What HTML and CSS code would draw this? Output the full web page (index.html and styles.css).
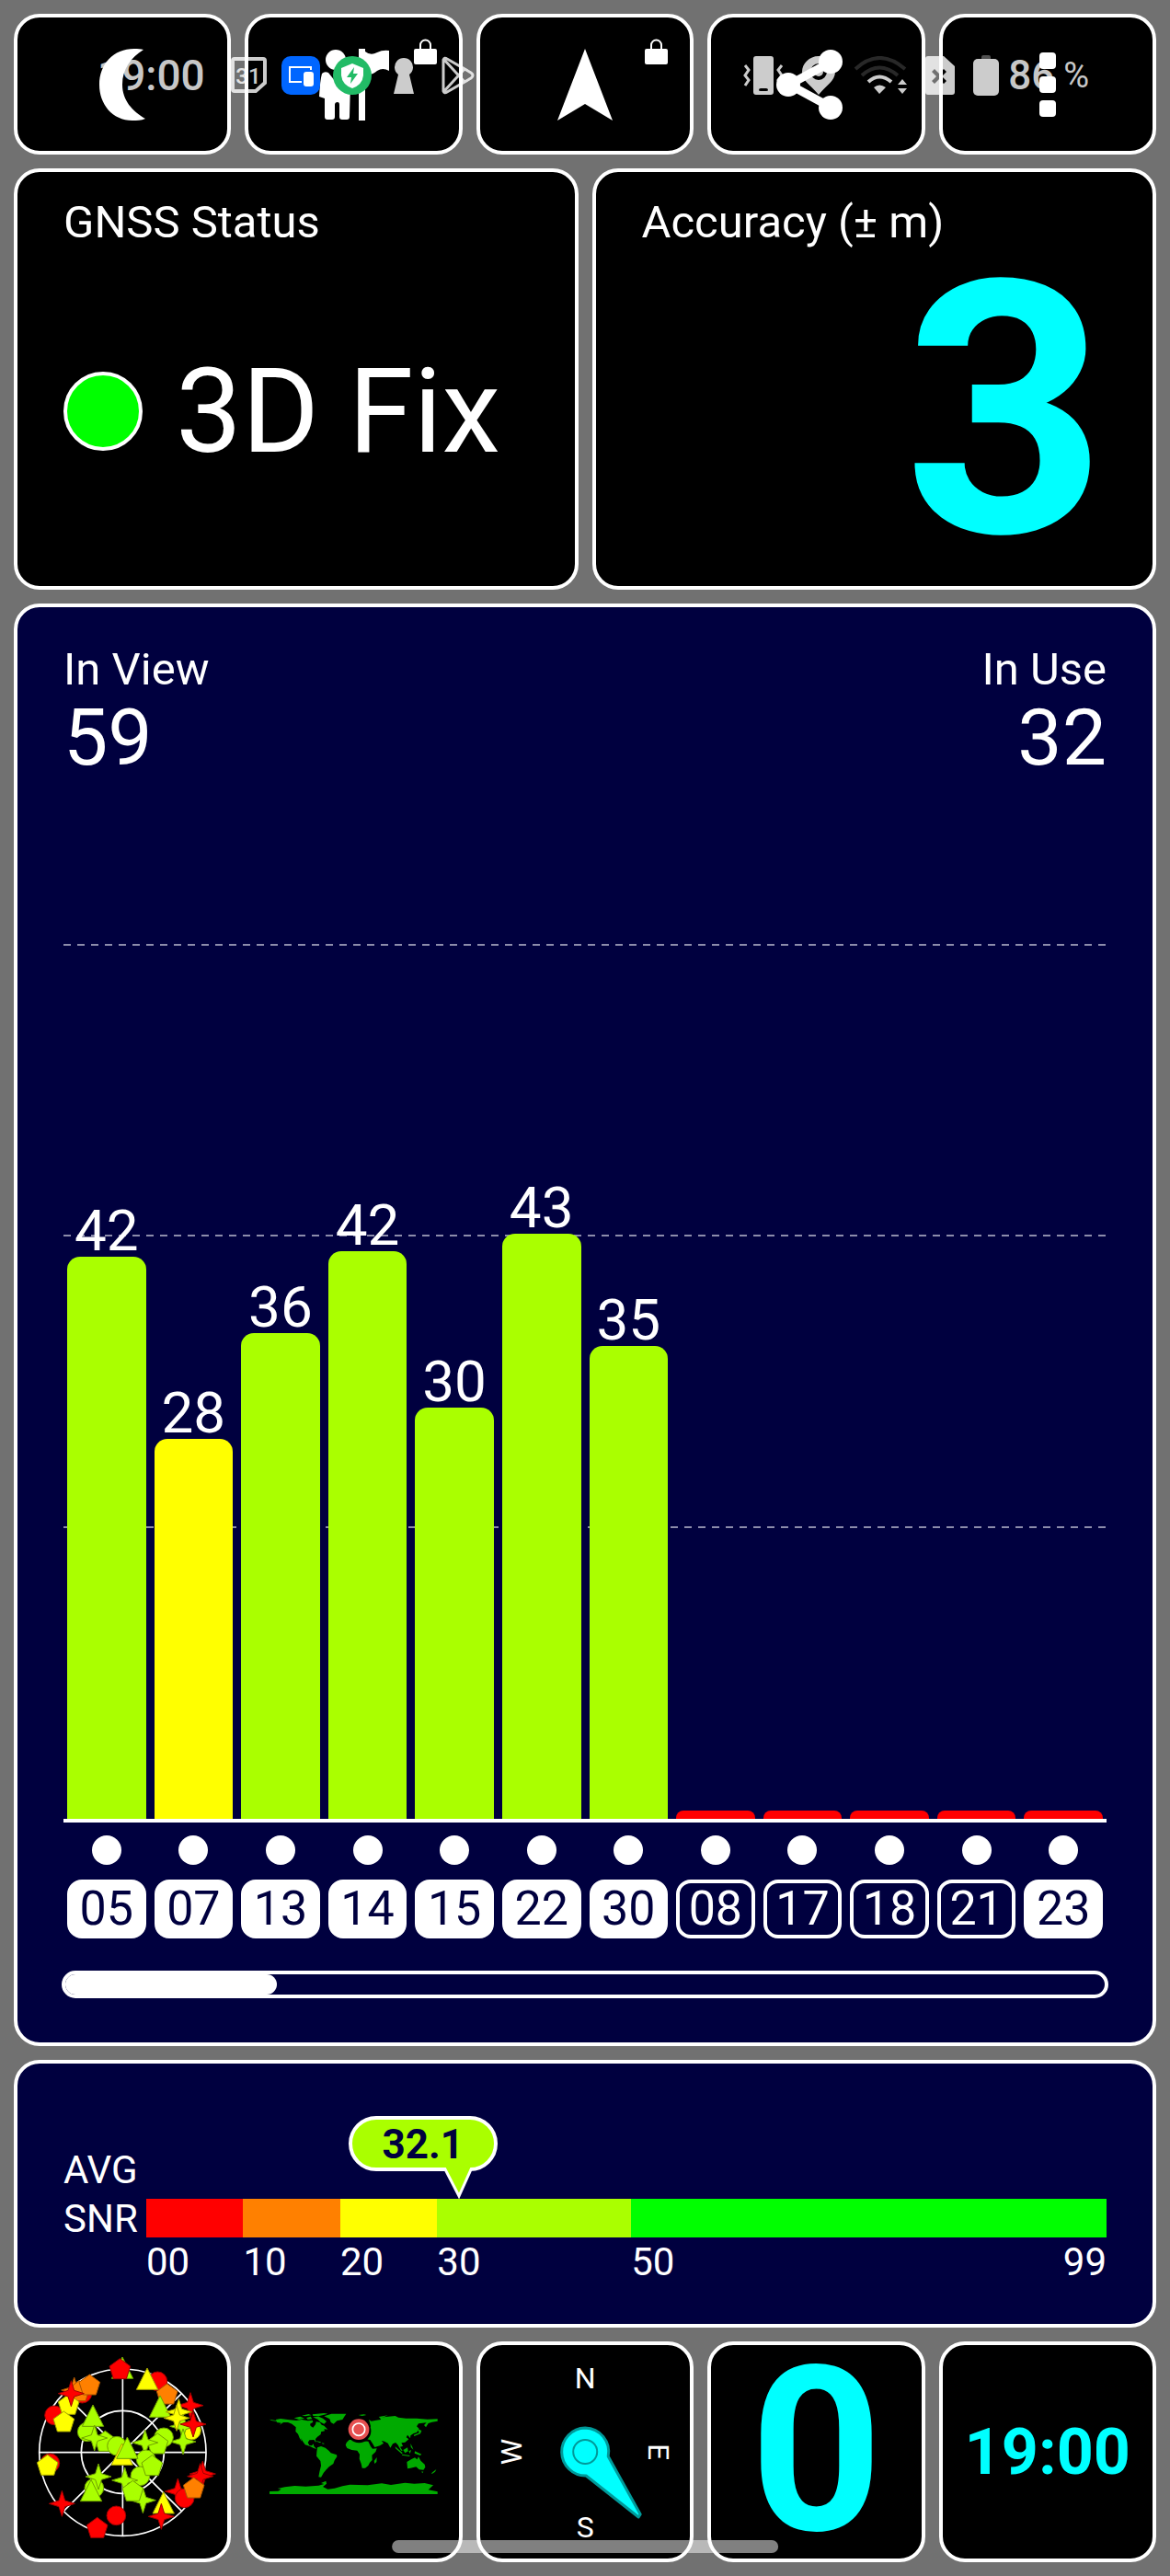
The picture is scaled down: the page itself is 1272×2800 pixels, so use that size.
FILE: index.html
```html
<!DOCTYPE html>
<html lang="en">
<head>
    <meta charset="UTF-8">
    <meta name="viewport" content="width=device-width, initial-scale=1.0">
    <title>GNSS Status</title>
    <link rel="stylesheet" href="styles.css">
</head>
<body>
    <main class="dashboard">
        <!-- toolbar -->
        <nav class="row toolbar">
            <button class="tile" aria-label="Night mode">
                <svg width="50" height="78" viewBox="0 0 50 78"><path d="M48 1C34 10 25 22 25 39C25 56 36 68 50 76C45 78 41 78 36 78C14 78 0 60 0 39C0 17 15 0 38 0C42 0 45 0 48 1Z"/></svg>
            </button>
            <button class="tile" aria-label="Guide">
                <svg width="76" height="78" viewBox="0 0 76 78">
                    <circle cx="18" cy="12" r="11"/>
                    <path d="M3 27Q6 24 10 26L18 36L28 25Q34 24 40 14L46 18Q42 28 34 36L33 74Q33 77 30 77H25Q22 77 22 74V61Q22 58 20 58Q17 58 17 61V74Q17 77 14 77H9Q6 77 6 74V54L0 52Q1 34 3 27Z"/>
                    <path d="M43 0H50V78H43Z"/>
                    <path d="M50 3Q56 8 63 4Q69 1 76 2V24Q69 20 63 24Q56 30 50 27Z"/>
                </svg>
                <svg class="lock" width="25" height="28" viewBox="0 0 25 28"><rect y="11" width="25" height="17" rx="2"/><path d="M7 12V7a5 5 0 0 1 11 0V12" fill="none" stroke="#fff" stroke-width="2"/></svg>
            </button>
            <button class="tile" aria-label="Navigate">
                <svg width="60" height="78" viewBox="0 0 60 78"><path d="M30 0L60 78L30 60L0 78Z"/></svg>
                <svg class="lock" width="25" height="28" viewBox="0 0 25 28"><rect y="11" width="25" height="17" rx="2"/><path d="M7 12V7a5 5 0 0 1 11 0V12" fill="none" stroke="#fff" stroke-width="2"/></svg>
            </button>
            <button class="tile" aria-label="Share">
                <svg width="86" height="76" viewBox="0 0 86 76"><path d="M60 13L14 38L60 63" fill="none" stroke="#fff" stroke-width="9"/><circle cx="59" cy="13" r="13"/><circle cx="13" cy="38" r="13"/><circle cx="59" cy="63" r="13"/></svg>
            </button>
            <button class="tile" aria-label="More">
                <svg width="18" height="70" viewBox="0 0 18 70"><rect width="18" height="18" rx="4"/><rect y="26" width="18" height="18" rx="4"/><rect y="52" width="18" height="18" rx="4"/></svg>
            </button>
        </nav>

        <div class="row summary">
            <section class="tile card">
                <h2 class="label">GNSS Status</h2>
                <div class="fix"><span class="fix-dot"></span>3D Fix</div>
            </section>
            <section class="tile card">
                <h2 class="label">Accuracy (± m)</h2>
                <div class="accuracy">3</div>
            </section>
        </div>

        <!-- satellites -->
        <section class="tile card satellites">
            <div class="counts">
                <div><h2 class="label">In View</h2><div class="count">59</div></div>
                <div class="right"><h2 class="label">In Use</h2><div class="count">32</div></div>
            </div>
            <div class="plot columns">
                <div class="column"><span class="value">42</span><div class="bar" style="height: 64.3%"></div></div>
                <div class="column"><span class="value">28</span><div class="bar fair" style="height: 43.4%"></div></div>
                <div class="column"><span class="value">36</span><div class="bar" style="height: 55.5%"></div></div>
                <div class="column"><span class="value">42</span><div class="bar" style="height: 64.9%"></div></div>
                <div class="column"><span class="value">30</span><div class="bar" style="height: 47%"></div></div>
                <div class="column"><span class="value">43</span><div class="bar" style="height: 66.9%"></div></div>
                <div class="column"><span class="value">35</span><div class="bar" style="height: 54.1%"></div></div>
                <div class="column"><div class="bar none" style="height: 1%"></div></div>
                <div class="column"><div class="bar none" style="height: 1%"></div></div>
                <div class="column"><div class="bar none" style="height: 1%"></div></div>
                <div class="column"><div class="bar none" style="height: 1%"></div></div>
                <div class="column"><div class="bar none" style="height: 1%"></div></div>
            </div>
            <div class="columns dots">
                <i></i><i></i><i></i><i></i><i></i><i></i><i></i><i></i><i></i><i></i><i></i><i></i>
            </div>
            <div class="columns chips">
                <span class="chip used">05</span>
                <span class="chip used">07</span>
                <span class="chip used">13</span>
                <span class="chip used">14</span>
                <span class="chip used">15</span>
                <span class="chip used">22</span>
                <span class="chip used">30</span>
                <span class="chip">08</span>
                <span class="chip">17</span>
                <span class="chip">18</span>
                <span class="chip">21</span>
                <span class="chip used">23</span>
            </div>
            <input class="scroller" type="range" min="0" max="47" value="0" aria-label="Scroll satellites">
        </section>

        <!-- average SNR -->
        <section class="tile card snr">
            <h2 class="snr-label">AVG<br>SNR</h2>
            <div class="scale">
                <div class="bubble">32.1
                    <svg class="tail" width="34" height="34" viewBox="0 0 34 34"><path d="M2 0L18 31L32 0" fill="#af0" stroke="#fff" stroke-width="3"/></svg>
                </div>
                <div class="segments">
                    <div class="ten red"></div>
                    <div class="ten orange"></div>
                    <div class="ten yellow"></div>
                    <div class="twenty lime"></div>
                    <div class="rest green"></div>
                </div>
                <div class="ticks">
                    <span class="ten">00</span>
                    <span class="ten">10</span>
                    <span class="ten">20</span>
                    <span class="twenty">30</span>
                    <span class="rest">50</span>
                    <span>99</span>
                </div>
            </div>
        </section>

        <!-- pages -->
        <nav class="row pages">
            <button class="tile" aria-label="Sky view">
                <svg class="fill" viewBox="57 57 685 696">
                    <defs>
                        <circle id="c" r="31"/>
                        <path id="p" d="M0 -35L34 -10L21 31H-21L-34 -10Z"/>
                        <path id="s" d="M0 -42L10 -10L42 0L10 10L0 42L-10 10L-42 0L-10 -10Z"/>
                        <path id="t" d="M0 -38L35 32H-35Z"/>
                    </defs>
                    <g fill="none" stroke="#fff" stroke-width="5">
                        <circle cx="400" cy="407" r="272"/><circle cx="400" cy="406" r="135"/>
                        <path d="M400 135V679M128 407H672M208 215L592 598M592 215L208 598"/>
                    </g>
                    <g class="sat-green">
                        <use href="#t" x="399" y="134"/>
                    </g>
                    <g class="sat-red">
                        <use href="#p" x="391" y="136"/>
                        <use href="#c" x="514" y="175"/><use href="#c" x="268" y="215"/><use href="#c" x="177" y="286"/>
                        <use href="#c" x="163" y="442"/>
                    </g>
                    <g class="sat-orange">
                        <use href="#s" x="242" y="204"/><use href="#p" x="258" y="208"/><use href="#p" x="292" y="188"/><use href="#p" x="545" y="218"/>
                    </g>
                    <g class="sat-yellow">
                        <use href="#t" x="480" y="170"/><use href="#p" x="224" y="252"/><use href="#p" x="208" y="308"/>
                        <use href="#p" x="155" y="450"/><use href="#c" x="624" y="335"/>
                    </g>
                    <g class="sat-red"><use href="#s" x="232" y="215"/><use href="#s" x="621" y="254"/></g>
                    <g class="sat-green">
                        <use href="#t" x="522" y="260"/><use href="#s" x="596" y="322"/><use href="#s" x="597" y="372"/>
                        <use href="#c" x="284" y="340"/><use href="#t" x="303" y="290"/><use href="#p" x="343" y="372"/><use href="#s" x="308" y="360"/>
                        <use href="#c" x="381" y="386"/><use href="#c" x="534" y="358"/><use href="#p" x="514" y="380"/><use href="#s" x="473" y="375"/>
                        <use href="#c" x="476" y="430"/>
                    </g>
                    <g class="sat-yellow">
                        <use href="#s" x="583" y="275"/><use href="#s" x="576" y="295"/><use href="#t" x="398" y="416"/>
                    </g>
                    <g class="sat-green">
                        <use href="#t" x="415" y="395"/><use href="#c" x="457" y="484"/><use href="#p" x="496" y="451"/>
                        <use href="#s" x="407" y="498"/><use href="#s" x="466" y="563"/><use href="#p" x="433" y="534"/>
                        <use href="#c" x="307" y="523"/><use href="#s" x="321" y="486"/><use href="#t" x="297" y="534"/>
                    </g>
                    <g class="sat-yellow"><use href="#t" x="533" y="574"/></g>
                    <g class="sat-red">
                        <use href="#s" x="630" y="315"/><use href="#s" x="661" y="477"/><use href="#s" x="653" y="485"/>
                        <use href="#s" x="580" y="534"/><use href="#c" x="602" y="556"/><use href="#s" x="526" y="616"/>
                        <use href="#s" x="202" y="574"/><use href="#c" x="379" y="613"/><use href="#p" x="317" y="654"/>
                    </g>
                    <g class="sat-orange"><use href="#p" x="632" y="524"/></g>
                </svg>
            </button>
            <button class="tile" aria-label="World map">
                <svg class="fill" viewBox="811 57 685 696">
                    <g fill="#0a0">
                        <path d="M880 299L886 303L904 306L900 300L916 297L945 301L968 303L985 300L1005 304L1020 302L1022 308L1012 314L1014 321L1022 326L1030 316L1032 307L1044 309L1050 317L1058 320L1070 332L1058 331L1060 337L1048 340L1047 348L1036 356L1030 363L1031 375L1025 366L1010 367L1005 375L1010 384L1018 385L1023 379L1025 387L1033 396L1024 393L1010 386L996 382L987 369L983 360L985 371L978 360L973 347L965 339L966 325L953 314L940 309L925 309L912 318L918 311L903 309L904 304Z"/>
                        <path d="M960 295l20-5 14 6-18 4zM985 287l22-5 10 4-20 3zM1000 294l14-4 5 8-14 2zM1020 283l38-4 12 2-30 8-18-1zM1022 292l18-2 14 6 12 10-8 8-12-6-8-8zM1026 368l22 5-3 3zM1050 376l10 2-6 2z"/>
                        <path d="M1058 289L1082 281L1130 281L1124 290L1118 300L1100 304L1089 314L1080 309L1076 298Z"/>
                        <path d="M1036 391L1048 387L1062 392L1074 402L1080 409L1099 415L1100 421L1092 433L1088 444L1074 454L1064 464L1056 474L1048 488L1040 487L1043 470L1048 450L1046 435L1033 419L1034 405Z"/>
                        <path d="M1140 366L1162 363L1166 369L1178 370L1202 371L1210 388L1216 395L1230 394L1226 405L1214 416L1215 432L1207 440L1202 450L1192 458L1182 458L1179 444L1173 428L1174 413L1166 401L1148 399L1133 393L1128 383L1131 375Z"/>
                        <path d="M1230 423L1229 438L1223 444L1221 435Z"/>
                        <path d="M1204 300L1212 305L1228 302L1243 300L1240 293L1260 291L1290 288L1300 293L1325 296L1360 296L1395 299L1428 298L1428 305L1410 308L1398 312L1390 325L1384 318L1392 310L1366 313L1360 322L1368 330L1360 342L1350 345L1340 352L1339 361L1330 350L1326 358L1334 364L1322 374L1310 376L1315 386L1306 389L1314 402L1309 401L1298 382L1291 375L1282 379L1274 392L1266 377L1255 371L1245 369L1252 377L1240 385L1223 390L1216 378L1208 366L1195 364L1185 360L1165 350L1165 340L1200 340L1210 322Z"/>
                        <path d="M1362 330L1376 336L1372 346L1352 354L1350 350L1368 343Z"/>
                        <path d="M1290 388l24 21-3 3-20-18zM1316 399l14-8 2 12-10 6zM1312 413l26 4-2 3-24-4zM1334 403l8-4-4 12zM1340 378l6 12 3 8-8-8zM1354 403l22 10-5 4-18-7z"/>
                        <path d="M1328 438L1343 429L1354 424L1361 430L1366 421L1373 434L1386 446L1388 455L1382 464L1368 463L1358 454L1340 458L1330 460Z"/>
                        <path d="M1376 469l6 1-4 5zM1408 475l9-8 7-5-4 8-10 7zM1170 285l18-2 8 2-14 3zM1236 291l30-5-24 10z"/>
                        <path d="M880 534L908 533L918 527L906 525L930 520L962 516L998 518L1040 515L1058 510L1048 507L1064 500L1066 509L1054 519L1070 527L1092 524L1118 517L1142 512L1200 514L1246 508L1276 513L1322 506L1352 509L1386 507L1414 514L1398 529L1428 535V543H880Z"/>
                    </g>
                    <circle cx="1172" cy="337" r="39" fill="#000"/>
                    <circle cx="1171" cy="332" r="34" fill="#e65050"/>
                    <circle cx="1171" cy="332" r="20" fill="none" stroke="#fff" stroke-width="5"/>
                </svg>
            </button>
            <button class="tile" aria-label="Compass">
                <svg class="fill" viewBox="0 0 228 232">
                    <path d="M114 90A26 26 0 1 0 115 142L172 187L174 184L139 121A26 26 0 0 0 114 90Z" fill="#0ff" stroke="#099" stroke-width="3" stroke-linejoin="round"/>
                    <circle cx="114" cy="116" r="13" fill="none" stroke="#099" stroke-width="2"/>
                    <g class="compass-text">
                        <text x="114" y="47">N</text>
                        <text x="114" y="209">S</text>
                        <text transform="translate(183 116) rotate(90)">E</text>
                        <text transform="translate(45 116) rotate(-90)">W</text>
                    </g>
                </svg>
            </button>
            <button class="tile speed">0</button>
            <button class="tile clock">19:00</button>
        </nav>

        <!-- system status bar, drawn over the toolbar -->
        <div class="status-bar">
            <div class="status-left">
                <span class="status-time">19:00</span>
                <svg width="42" height="42" viewBox="0 0 42 42"><path d="M5 3H36Q38 3 38 5V29L28 38H5Q3 38 3 36V5Q3 3 5 3Z" fill="none" stroke="#fff" stroke-width="4"/><text x="20" y="30" class="calendar-day">31</text></svg>
                <svg class="solid" width="42" height="42" viewBox="0 0 42 42"><rect width="42" height="42" rx="10" fill="#06f"/><path d="M22 28H9V12H32V15" fill="none" stroke="#fff" stroke-width="2"/><rect x="24" y="17" width="11" height="16" rx="3" fill="#fff"/></svg>
                <svg class="solid" width="42" height="42" viewBox="0 0 42 42"><circle cx="21" cy="21" r="21" fill="#2b6"/><path d="M21 8L33 13V21Q32 31 21 35Q10 31 9 21V13Z" fill="#fff"/><path d="M23 12L15 23H20L19 30L27 19H22Z" fill="#2b6"/></svg>
                <svg width="42" height="42" viewBox="0 0 42 42"><path d="M15 20A10 10 0 1 1 27 20L32 41H10Z"/></svg>
                <svg width="42" height="42" viewBox="0 0 42 42"><path d="M8 4V38Q9 41 12 39L38 24Q42 21 38 18L12 3Q9 1 8 4ZM9 4L31 28M9 38L31 14" fill="none" stroke="#fff" stroke-width="3" stroke-linejoin="round"/></svg>
            </div>
            <div class="status-right">
                <svg width="44" height="42" viewBox="0 0 44 42"><path fill-rule="evenodd" d="M14 0H30Q33 0 33 3V39Q33 42 30 42H14Q11 42 11 39V3Q11 0 14 0ZM19 35Q17 35 17 37Q17 38 19 38H25Q27 38 27 37Q27 35 25 35Z"/><path d="M2 10L6 15L2 21L6 26L2 32M42 10L38 15L42 21L38 26L42 32" fill="none" stroke="#fff" stroke-width="3"/></svg>
                <svg width="36" height="42" viewBox="0 0 36 42"><path fill-rule="evenodd" d="M18 0C28 0 36 8 36 17C36 27 26 32 18 42C10 32 0 27 0 17C0 8 8 0 18 0ZM18 8A9 9 0 1 0 18 26A9 9 0 1 0 18 8Z"/><circle cx="18" cy="17" r="5"/></svg>
                <svg width="58" height="42" viewBox="0 0 58 42"><g fill="none" stroke="#fff" stroke-width="4"><path d="M2 14Q28 -10 56 14M9 21Q28 4 48 21" opacity=".2"/><path d="M16 28Q28 17 41 28"/></g><path d="M22 34Q28 29 35 34L28 41ZM48 31L53 25L58 31ZM48 35H58L53 41Z"/></svg>
                <svg width="32" height="42" viewBox="0 0 32 42"><path fill-rule="evenodd" d="M3 0H20L32 11V39Q32 42 29 42H3Q0 42 0 39V3Q0 0 3 0ZM7 17L12 22L7 27L10 30L15 25L20 30L23 27L18 22L23 17L20 14L15 19L10 14Z"/></svg>
                <span class="battery">
                    <svg width="28" height="44" viewBox="0 0 28 44"><path d="M9 4V2Q9 0 11 0H17Q19 0 19 2V4Z" opacity=".4"/><rect y="4" width="28" height="40" rx="5"/></svg>
                    86 <small>%</small>
                </span>
            </div>
        </div>
        <div class="home-indicator"></div>
    </main>
</body>
</html>
```
FILE: styles.css
```css
* {
    box-sizing: border-box;
}
body {
    margin: 0;
    background: #717171;
    color: #fff;
    font-family: Roboto, "Liberation Sans", sans-serif;
}
.dashboard {
    position: relative;
    height: 100vh;
    min-height: 2000px;
    padding: 15px;
    display: grid;
    grid-template-rows: minmax(0, 153fr) minmax(0, 458fr) minmax(0, 1568fr) minmax(0, 291fr) minmax(0, 240fr);
    gap: 15px;
}
.row {
    display: grid;
    grid-template-rows: minmax(0, 1fr);
    gap: 15px;
}
.toolbar, .pages {
    grid-template-columns: repeat(5, minmax(0, 1fr));
}
.summary {
    grid-template-columns: 1fr 1fr;
}
.tile {
    position: relative;
    display: flex;
    justify-content: center;
    align-items: center;
    min-width: 0;
    padding: 0;
    background: #000;
    border: 4px solid #fff;
    border-radius: 28px;
    color: #fff;
    font-family: inherit;
}
.tile svg {
    fill: #fff;
}
button.tile {
    cursor: pointer;
}
.lock {
    position: absolute;
    top: 23px;
    right: 24px;
}
.card {
    flex-direction: column;
    justify-content: flex-start;
    align-items: stretch;
    padding: 25px 50px 15px;
}
.label {
    margin: 0;
    font-size: 49px;
    font-weight: 400;
    line-height: 60px;
}

/* fix and accuracy */
.fix {
    flex: 1;
    display: flex;
    align-items: center;
    gap: 36px;
    font-size: 128px;
    line-height: 1;
    white-space: nowrap;
}
.fix-dot {
    width: 86px;
    height: 86px;
    border: 4px solid #fff;
    border-radius: 50%;
    background: #0f0;
}
.accuracy {
    color: #0ff;
    font-size: 384px;
    font-weight: 700;
    line-height: 350px;
    text-align: right;
}

/* satellite chart */
.satellites, .snr {
    background: #00003f;
}
.satellites {
    padding: 38px 50px 48px;
}
.counts {
    display: flex;
    justify-content: space-between;
    margin-bottom: 180px;
}
.count {
    font-size: 86px;
    line-height: 88px;
}
.right {
    text-align: right;
}
.columns {
    display: grid;
    grid-template-columns: repeat(12, minmax(0, 1fr));
    gap: 9px;
    padding: 0 4px;
}
.plot {
    --dashes: repeating-linear-gradient(90deg, #8c8cab 0 8px, transparent 8px 15px);
    flex: 1;
    border-bottom: 4px solid #fff;
    background-image: var(--dashes), var(--dashes), var(--dashes);
    background-size: 100% 2px;
    background-repeat: no-repeat;
    background-position: 0 0, 0 33.33%, 0 66.66%;
}
.column {
    display: flex;
    flex-direction: column;
    justify-content: flex-end;
}
.value {
    font-size: 62px;
    line-height: 56px;
    text-align: center;
}
.bar {
    background: #af0;
    border-radius: 14px 14px 0 0;
}
.bar.fair {
    background: #ff0;
}
.bar.none {
    background: #f00;
    border-radius: 8px 8px 0 0;
}
.dots {
    margin-top: 14px;
    justify-items: center;
}
.dots i {
    width: 32px;
    height: 32px;
    border-radius: 50%;
    background: #fff;
}
.chips {
    margin-top: 16px;
}
.chip {
    border: 4px solid #fff;
    border-radius: 16px;
    font-size: 52px;
    line-height: 56px;
    text-align: center;
}
.chip.used {
    background: #fff;
    color: #00003f;
}
.scroller {
    appearance: none;
    -webkit-appearance: none;
    height: 30px;
    margin: 35px -2px 0;
    border: 4px solid #fff;
    border-radius: 15px;
    background: transparent;
}
.scroller::-webkit-slider-thumb {
    -webkit-appearance: none;
    width: 230px;
    height: 22px;
    border-radius: 11px;
    background: #fff;
}

/* average SNR */
.snr {
    flex-direction: row;
    align-items: flex-start;
    padding-top: 89px;
}
.snr-label {
    width: 90px;
    margin: 0;
    font-size: 42px;
    font-weight: 400;
    line-height: 53px;
}
.scale {
    position: relative;
    flex: 1;
    padding-top: 58px;
}
.segments, .ticks {
    display: flex;
}
.segments {
    height: 42px;
}
.ten {
    flex: 10 1 0;
}
.twenty {
    flex: 20 1 0;
}
.rest {
    flex: 49 1 0;
}
.ticks {
    position: relative;
    margin-top: 2px;
    font-size: 42px;
    line-height: 50px;
}
.ticks span:last-child {
    position: absolute;
    right: 0;
}
.red { background: #f00; }
.orange { background: #ff8000; }
.yellow { background: #ff0; }
.lime { background: #af0; }
.green { background: #0f0; }
.bubble {
    position: absolute;
    top: -32px;
    left: 28.8%;
    width: 162px;
    height: 60px;
    transform: translateX(-50%);
    background: #af0;
    border: 4px solid #fff;
    border-radius: 30px;
    color: #00003f;
    font-size: 44px;
    font-weight: 700;
    line-height: 54px;
    text-align: center;
}
.tail {
    position: absolute;
    top: 52px;
    right: 22px;
}

/* page tiles */
.fill {
    width: 100%;
    height: 100%;
}
.sat-red { fill: #f00; stroke: #a00000; }
.sat-orange { fill: #ff8000; stroke: #a85400; }
.sat-yellow { fill: #ff0; stroke: #a0a000; }
.sat-green { fill: #af0; stroke: #6ea000; }
.sat-red, .sat-orange, .sat-yellow, .sat-green {
    stroke-width: 3px;
}
.compass-text text {
    font-size: 32px;
    text-anchor: middle;
}
.speed, .clock {
    color: #0ff;
    font-weight: 700;
    line-height: 1;
}
.speed {
    font-size: 250px;
    line-height: 232px;
}
.clock {
    font-size: 70px;
}

/* system overlays */
.status-bar {
    position: absolute;
    top: 61px;
    left: 0;
    right: 0;
    height: 42px;
    padding: 0 88px 0 106px;
    display: flex;
    justify-content: space-between;
    pointer-events: none;
    color: rgba(255, 255, 255, 0.8);
    font-size: 46px;
    font-weight: 500;
}
.status-bar svg {
    fill: #fff;
    opacity: 0.8;
}
.status-bar svg.solid {
    opacity: 1;
}
.status-left, .status-right, .battery {
    display: flex;
    align-items: center;
}
.status-left {
    gap: 14px;
}
.status-time {
    width: 130px;
}
.calendar-day {
    font-size: 24px;
    text-anchor: middle;
}
.status-right {
    gap: 20px;
}
.battery {
    gap: 10px;
    font-size: 44px;
}
.battery small {
    font-size: 38px;
    font-weight: 400;
}
.home-indicator {
    position: absolute;
    bottom: 25px;
    left: 50%;
    width: 33%;
    height: 14px;
    transform: translateX(-50%);
    border-radius: 7px;
    background: rgba(255, 255, 255, 0.5);
}
```
